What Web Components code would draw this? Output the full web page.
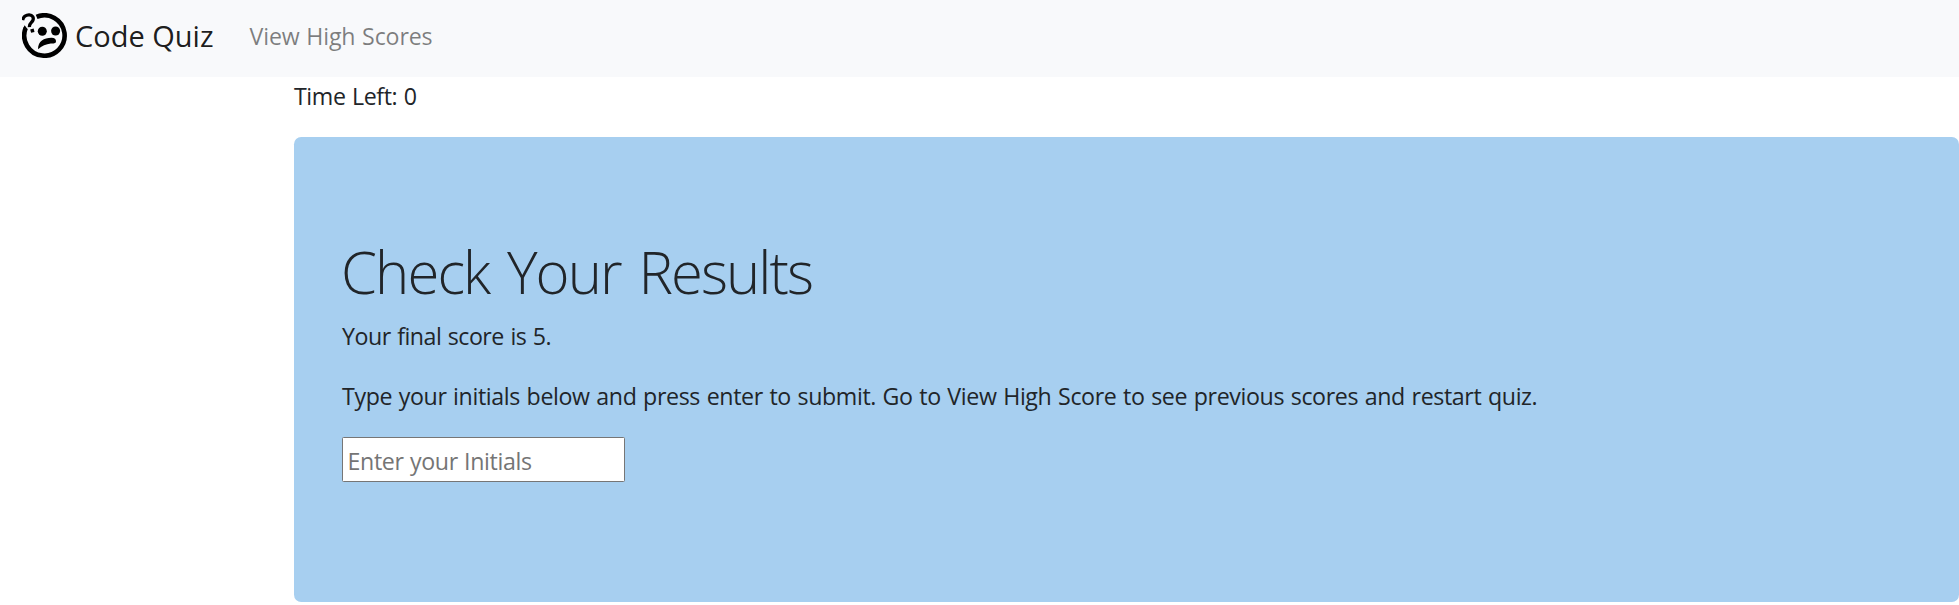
<!DOCTYPE html>
<html lang="en">
<head>
<meta charset="utf-8">
<title>Code Quiz</title>
<style>
body { margin: 0; background: #fff; color: #212529; font-family: "Open Sans", "Noto Sans", sans-serif; font-size: 23.2px; line-height: 36px; overflow: hidden; }
</style>
</head>
<body>
<quiz-navbar><span slot="brand">Code Quiz</span><span slot="link">View High Scores</span></quiz-navbar>
<quiz-main>
  <quiz-timer>Time Left: 0</quiz-timer>
  <quiz-panel>
    <span slot="title">Check Your Results</span>
    <span slot="score">Your final score is 5.</span>
    <span slot="help">Type your initials below and press enter to submit. Go to View High Score to see previous scores and restart quiz.</span>
    <initials-field slot="field" placeholder="Enter your Initials"></initials-field>
  </quiz-panel>
</quiz-main>
<script>
function define(name, html, setup) {
  customElements.define(name, class extends HTMLElement {
    connectedCallback() {
      if (this.shadowRoot) return;
      const t = document.createElement('template');
      t.innerHTML = html;
      this.attachShadow({ mode: 'open' }).append(t.content.cloneNode(true));
      if (setup) setup(this);
    }
  });
}
define('quiz-logo', `
<style>:host { display: block; width: 45px; height: 45px; } svg { display: block; }</style>
<svg width="45" height="45" viewBox="0 0 45 45">
  <path d="M14.6 3.9A20.2 20.2 0 1 1 3.6 15.2" fill="none" stroke="#000" stroke-width="4.6"/>
  <path d="M2.6 12.2L1.3 15.2 5.6 16.2Z"/>
  <path d="M.6 7.2C1.4 3.4 4.4 1.7 7.2 1.8C10.5 2 12 4.6 10.9 7.4C10 9.6 7 10.4 7.4 14.2" fill="none" stroke="#000" stroke-width="3.3"/>
  <path d="M8.2 16.6L11.6 15.6 12.5 18.9 9.1 19.8Z"/>
  <circle cx="20.3" cy="18.2" r="4.5"/><circle cx="33.6" cy="18" r="4.5"/>
  <path d="M16 36.3C16 28 22 25 29.3 24.7C32.5 24.6 34.2 26 34 28.4C33.8 30.6 31.5 30.3 28.8 30.6C24 31.2 20 33 16 36.3Z"/>
</svg>`);
define('quiz-navbar', `
<style>
:host { display: flex; box-sizing: border-box; height: 77px; padding: 13px 22px 0; background: #f8f9fb; }
.brand { margin-left: 8px; font-size: 29px; line-height: 46px; color: rgba(0,0,0,.9); width: 174.5px; white-space: nowrap; }
.link { line-height: 46px; color: rgba(0,0,0,.5); letter-spacing: -.15px; word-spacing: .8px; }
</style>
<quiz-logo></quiz-logo><div class="brand"><slot name="brand"></slot></div><div class="link"><slot name="link"></slot></div>`);
define('quiz-main', `
<style>:host { display: block; margin-left: 294px; }</style><slot></slot>`);
define('quiz-timer', `
<style>:host { display: block; height: 36px; line-height: 38px; margin-bottom: 24px; letter-spacing: -.4px; word-spacing: .8px; }</style><slot></slot>`);
define('quiz-panel', `
<style>
:host { display: block; box-sizing: border-box; height: 465px; padding: 96px 48px; background: #a7cff0; border-radius: 7.2px; }
h1 { margin: 0 0 12px -1px; height: 72px; font-size: 58px; font-weight: 300; line-height: 77px; letter-spacing: -1.9px; word-spacing: 4.5px; }
p { margin: 0 0 24px; height: 36px; line-height: 38px; }
.score { letter-spacing: -.5px; word-spacing: 1px; }
.help { letter-spacing: -.37px; word-spacing: .95px; white-space: nowrap; }
</style>
<h1><slot name="title"></slot></h1>
<p class="score"><slot name="score"></slot></p>
<p class="help"><slot name="help"></slot></p>
<slot name="field"></slot>`);
define('initials-field', `
<style>
:host { display: block; }
input { display: block; box-sizing: border-box; width: 283px; height: 45px; margin: 0; padding: 3px 3px 0 4.5px; border: 1px solid #767676; border-radius: 1.5px; background: #fff; font: inherit; letter-spacing: -.35px; word-spacing: .6px; outline: 0; }
input::placeholder { color: #757575; }
</style>
<input type="text">`, el => { el.shadowRoot.querySelector('input').placeholder = el.getAttribute('placeholder'); });
</script>
</body>
</html>
